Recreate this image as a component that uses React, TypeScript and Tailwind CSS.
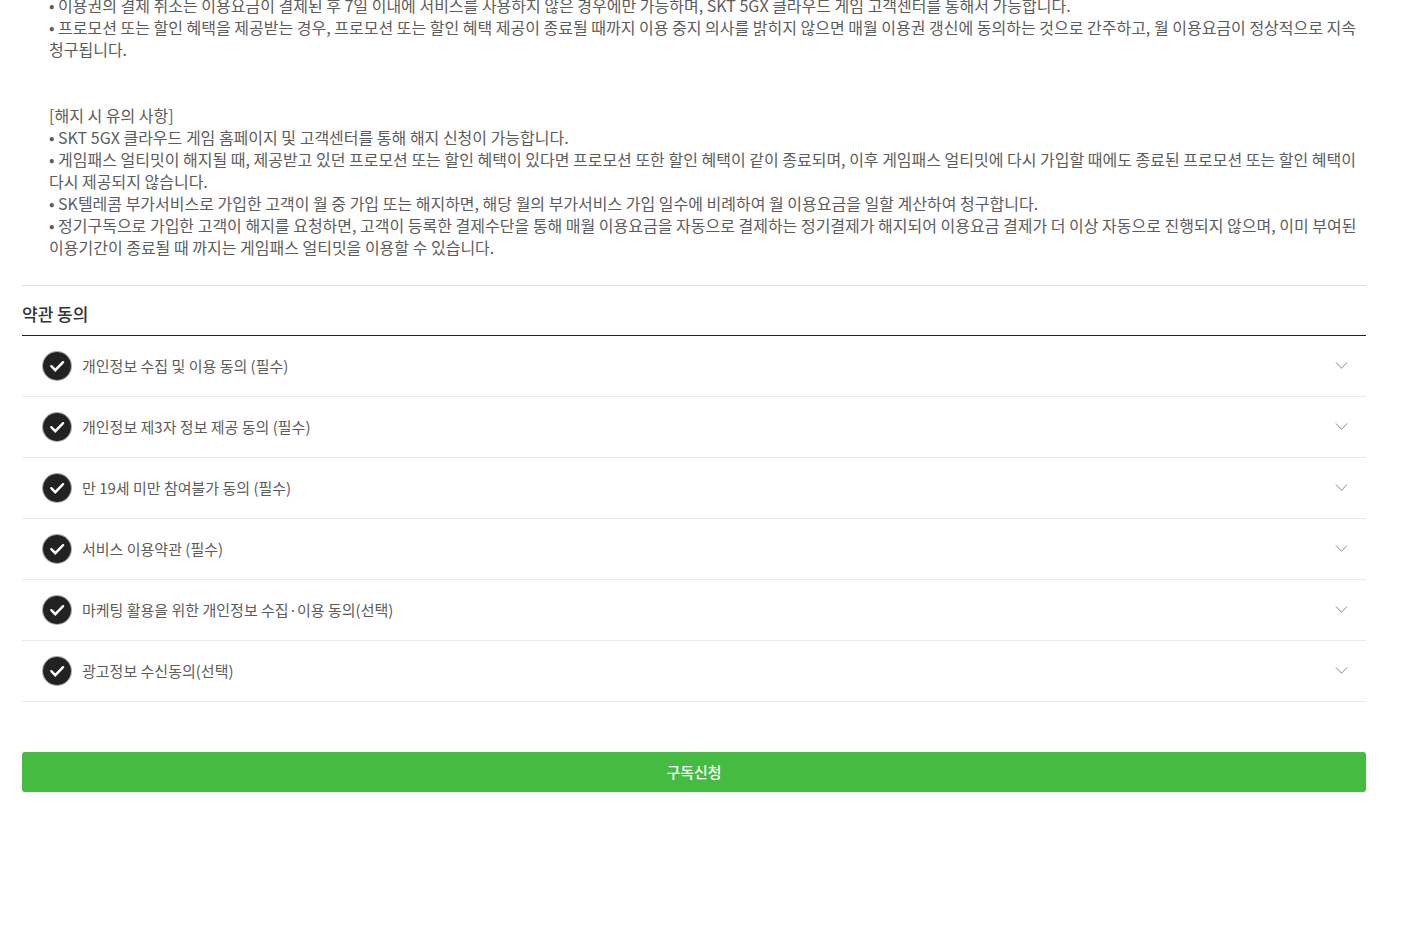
const paymentNotes = [
  '이용권의 결제 취소는 이용요금이 결제된 후 7일 이내에 서비스를 사용하지 않은 경우에만 가능하며, SKT 5GX 클라우드 게임 고객센터를 통해서 가능합니다.',
  '프로모션 또는 할인 혜택을 제공받는 경우, 프로모션 또는 할인 혜택 제공이 종료될 때까지 이용 중지 의사를 밝히지 않으면 매월 이용권 갱신에 동의하는 것으로 간주하고, 월 이용요금이 정상적으로 지속 청구됩니다.',
];

const cancelNotes = [
  'SKT 5GX 클라우드 게임 홈페이지 및 고객센터를 통해 해지 신청이 가능합니다.',
  '게임패스 얼티밋이 해지될 때, 제공받고 있던 프로모션 또는 할인 혜택이 있다면 프로모션 또한 할인 혜택이 같이 종료되며, 이후 게임패스 얼티밋에 다시 가입할 때에도 종료된 프로모션 또는 할인 혜택이 다시 제공되지 않습니다.',
  'SK텔레콤 부가서비스로 가입한 고객이 월 중 가입 또는 해지하면, 해당 월의 부가서비스 가입 일수에 비례하여 월 이용요금을 일할 계산하여 청구합니다.',
  '정기구독으로 가입한 고객이 해지를 요청하면, 고객이 등록한 결제수단을 통해 매월 이용요금을 자동으로 결제하는 정기결제가 해지되어 이용요금 결제가 더 이상 자동으로 진행되지 않으며, 이미 부여된 이용기간이 종료될 때 까지는 게임패스 얼티밋을 이용할 수 있습니다.',
];

const terms = [
  '개인정보 수집 및 이용 동의 (필수)',
  '개인정보 제3자 정보 제공 동의 (필수)',
  '만 19세 미만 참여불가 동의 (필수)',
  '서비스 이용약관 (필수)',
  '마케팅 활용을 위한 개인정보 수집·이용 동의(선택)',
  '광고정보 수신동의(선택)',
];

function Notes({ items }: { items: string[] }) {
  return (
    <ul>
      {items.map((item) => (
        <li key={item}>{`• ${item}`}</li>
      ))}
    </ul>
  );
}

function Term({ label, id }: { label: string; id: string }) {
  return (
    <li className="flex h-[61px] items-center justify-between border-b border-[#ebebeb] pr-[18px] pl-5">
      <label htmlFor={id} className="flex cursor-pointer items-center gap-[10px]">
        <span className="grid size-[30px] place-items-center">
          <input
            id={id}
            type="checkbox"
            defaultChecked
            className="peer col-start-1 row-start-1 size-[30px] appearance-none rounded-full border border-[#cccccc] bg-clip-padding checked:border-[#22222266] checked:bg-[#222222]"
          />
          <svg
            viewBox="0 0 30 30"
            className="pointer-events-none col-start-1 row-start-1 size-[30px] opacity-0 peer-checked:opacity-100"
            fill="none"
            stroke="#ffffff"
            strokeWidth="2.4"
            strokeLinecap="round"
            aria-hidden="true"
          >
            <path d="M9.3 15.2l4 4 7.8-8" />
          </svg>
        </span>
        <span>{label}</span>
      </label>
      <button type="button" aria-label={`${label} 펼치기`} className="cursor-pointer">
        <svg viewBox="0 0 14 10" className="h-[10px] w-[14px]" fill="none" stroke="#8a8a8a" aria-hidden="true">
          <path d="M2 1.5l5.5 5.8L13 1.5" />
        </svg>
      </button>
    </li>
  );
}

export default function App() {
  return (
    <main className="min-h-screen overflow-hidden bg-white pr-[39px] pl-[22px] font-['Noto_Sans_CJK_KR',sans-serif] text-[15px] leading-[22px] break-keep text-[#5c5c5c]">
      <section className="-mt-[6px] border-b border-[#dddddd] pr-1 pb-[27px] pl-[27px] text-base leading-[22px]">
        <Notes items={paymentNotes} />
        <h3 className="mt-[44px]">[해지 시 유의 사항]</h3>
        <Notes items={cancelNotes} />
      </section>
      <form onSubmit={(event) => event.preventDefault()}>
        <h2 className="flex h-[50px] items-center border-b border-[#222222] pt-[6px] text-[17px] font-medium text-[#333333]">
          약관 동의
        </h2>
        <ul>
          {terms.map((label, index) => (
            <Term key={label} label={label} id={`term-${index}`} />
          ))}
        </ul>
        <button
          type="submit"
          className="mt-[50px] h-[40px] w-full cursor-pointer rounded-[3px] bg-[#46bb41] text-[15px] font-medium text-white"
        >
          구독신청
        </button>
      </form>
    </main>
  );
}
